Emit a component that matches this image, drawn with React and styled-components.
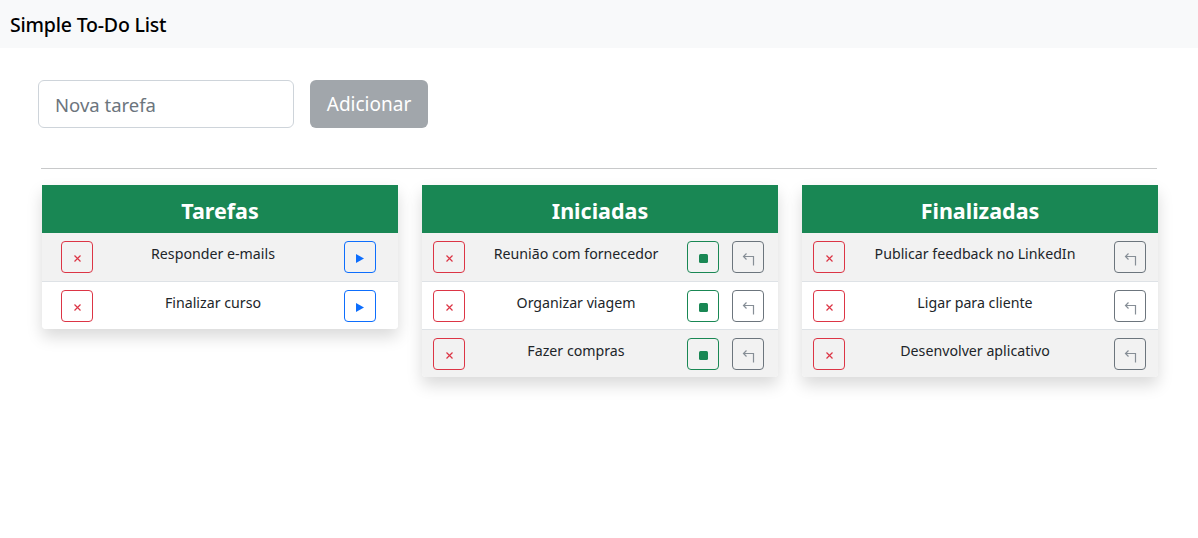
import React from "react";
import styled, { createGlobalStyle } from "styled-components";

const GlobalStyle = createGlobalStyle`
  body {
    margin: 0;
    background: #fff;
    font-family: "Noto Sans", "Open Sans", sans-serif;
    color: #212529;
  }
`;

const Navbar = styled.nav`
  height: 48px;
  background: #f8f9fa;
  display: flex;
  align-items: center;
  padding: 0 10px;
`;

const Brand = styled.span`
  font-size: 19.5px;
  font-weight: 500;
  color: #000;
  letter-spacing: -0.2px;
`;

const Container = styled.main`
  width: 1116px;
  margin: 0 auto;
  padding: 32px 0 60px;
`;

const Form = styled.form`
  display: flex;
  gap: 16px;
  margin-left: -3px;
`;

const Input = styled.input`
  width: 256px;
  height: 48px;
  box-sizing: border-box;
  border: 1px solid #ced4da;
  border-radius: 6px;
  padding: 0 16px;
  font-family: inherit;
  font-size: 18.5px;
  color: #212529;
  &::placeholder {
    color: #6c757d;
  }
`;

const AddButton = styled.button`
  width: 118px;
  height: 48px;
  border: none;
  border-radius: 6px;
  background: #a1a6ab;
  color: #fff;
  font-family: inherit;
  font-size: 19px;
`;

const Divider = styled.hr`
  margin: 40px 0 16px;
  border: none;
  border-top: 1px solid #c8c9ca;
`;

const Board = styled.div`
  display: grid;
  grid-template-columns: repeat(3, 356px);
  gap: 24px;
  margin-left: 1px;
  align-items: start;
`;

const Card = styled.section`
  background: #fff;
  box-shadow: 0 8px 16px rgba(0, 0, 0, 0.15);
  border-radius: 0 0 4px 4px;
  overflow: hidden;
`;

const CardHeader = styled.h3`
  margin: 0;
  height: 48px;
  background: #198754;
  color: #fff;
  font-size: 21.5px;
  font-weight: 700;
  display: flex;
  align-items: center;
  justify-content: center;
  padding-top: 3px;
  box-sizing: border-box;
`;

const Row = styled.div`
  height: 48px;
  box-sizing: border-box;
  display: flex;
  align-items: center;
  padding: 0 ${(p) => p.$right}px 0 ${(p) => p.$left}px;
  background: ${(p) => (p.$odd ? "#f2f2f2" : "#fff")};
  & + & {
    border-top: 1px solid #dee2e6;
  }
`;

const TaskText = styled.span`
  flex: 1;
  text-align: center;
  font-size: 14.2px;
  padding-bottom: 7px;
  margin-right: ${(p) => p.$shift}px;
  white-space: nowrap;
`;

const IconButton = styled.button`
  width: 32px;
  height: 32px;
  box-sizing: border-box;
  flex: none;
  padding: 3px 0 0;
  background: transparent;
  border: 1px solid ${(p) => p.$color};
  border-radius: 4px;
  display: flex;
  align-items: center;
  justify-content: center;
`;

const ActionGroup = styled.div`
  display: flex;
  gap: 13px;
`;

const RED = "#dc3545";
const BLUE = "#0d6efd";
const GREEN = "#198754";
const GRAY = "#6c757d";

const CloseIcon = () => (
  <svg width="7" height="7" viewBox="0 0 7 7">
    <path d="M0.5 0.5 L6.5 6.5 M6.5 0.5 L0.5 6.5" stroke={RED} strokeWidth="1.2" />
  </svg>
);

const PlayIcon = () => (
  <svg width="8" height="9" viewBox="0 0 8 9">
    <path d="M0 0 L8 4.5 L0 9 Z" fill={BLUE} />
  </svg>
);

const StopIcon = () => (
  <svg width="9" height="9" viewBox="0 0 9 9">
    <rect x="0" y="0" width="9" height="9" rx="1.5" fill={GREEN} />
  </svg>
);

const UndoIcon = () => (
  <svg width="15" height="15" viewBox="0 0 15 15">
    <path
      d="M12.5 14.5 V5.5 H2.5 M5.5 2.5 L2.5 5.5 L5.5 8.5"
      fill="none"
      stroke="#868e96"
      strokeWidth="1.2"
    />
  </svg>
);

const columns = [
  {
    title: "Tarefas",
    layout: { left: 19, right: 22, shift: 11 },
    actions: ["play"],
    tasks: ["Responder e-mails", "Finalizar curso"],
  },
  {
    title: "Iniciadas",
    layout: { left: 11, right: 14, shift: 0 },
    actions: ["stop", "undo"],
    tasks: ["Reunião com fornecedor", "Organizar viagem", "Fazer compras"],
  },
  {
    title: "Finalizadas",
    layout: { left: 11, right: 12, shift: 9 },
    actions: ["undo"],
    tasks: ["Publicar feedback no LinkedIn", "Ligar para cliente", "Desenvolver aplicativo"],
  },
];

const actionButton = (kind) => {
  if (kind === "play")
    return (
      <IconButton key={kind} $color={BLUE}>
        <PlayIcon />
      </IconButton>
    );
  if (kind === "stop")
    return (
      <IconButton key={kind} $color={GREEN}>
        <StopIcon />
      </IconButton>
    );
  return (
    <IconButton key={kind} $color={GRAY}>
      <UndoIcon />
    </IconButton>
  );
};

const App = () => {
  return (
    <>
      <GlobalStyle />
      <Navbar>
        <Brand>Simple To-Do List</Brand>
      </Navbar>
      <Container>
        <Form onSubmit={(e) => e.preventDefault()}>
          <Input placeholder="Nova tarefa" />
          <AddButton disabled>Adicionar</AddButton>
        </Form>
        <Divider />
        <Board>
          {columns.map((col) => (
            <Card key={col.title}>
              <CardHeader>{col.title}</CardHeader>
              {col.tasks.map((task, i) => (
                <Row
                  key={task}
                  $odd={i % 2 === 0}
                  $left={col.layout.left}
                  $right={col.layout.right}
                >
                  <IconButton $color={RED}>
                    <CloseIcon />
                  </IconButton>
                  <TaskText $shift={col.layout.shift}>{task}</TaskText>
                  <ActionGroup>{col.actions.map(actionButton)}</ActionGroup>
                </Row>
              ))}
            </Card>
          ))}
        </Board>
      </Container>
    </>
  );
};

export default App;
